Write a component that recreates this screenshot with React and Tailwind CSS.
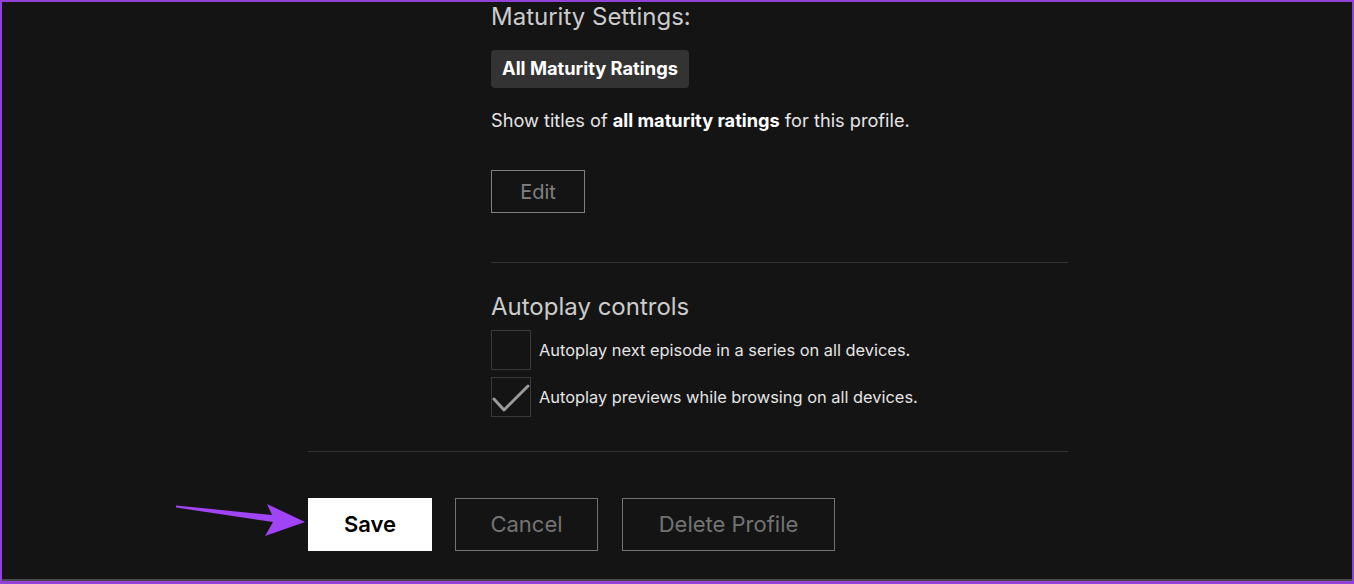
import React from 'react'

const font = { fontFamily: 'Inter, "Noto Sans", sans-serif' }

function CheckRow({ checked, label }) {
  return (
    <div className="flex items-center gap-2">
      <div className="w-10 h-10 border border-[#3a3a3a] flex items-center justify-center">
        {checked && (
          <svg width="38" height="38" viewBox="0 0 38 38" fill="none">
            <path d="M2 21 L12 32 L36 8" stroke="#9a9a9a" strokeWidth="3" strokeLinecap="round" strokeLinejoin="round" />
          </svg>
        )}
      </div>
      <span className="text-[16.4px] text-[#e5e5e5]">{label}</span>
    </div>
  )
}

export default function App() {
  return (
    <div
      className="relative w-[1354px] h-[584px] bg-[#9241d6] pt-[2px] px-[2px] pb-[3px] overflow-hidden"
      style={font}
    >
      <div className="h-full bg-[#141414] border-b-2 border-[#4a4a4a] pl-[306px]">
        <div className="w-[760px] flex flex-col">
          {/* Profile settings column */}
          <div className="ml-[183px] flex flex-col items-start">
            <h2 className="mt-[1px] text-[24px] leading-[28px] text-[#cccccc]">Maturity Settings:</h2>

            <div className="mt-[19px] h-[38px] px-[11px] flex items-center bg-[#333333] rounded-sm text-[18.3px] font-bold text-white">
              All Maturity Ratings
            </div>

            <p className="mt-5 text-[18.2px] leading-6 text-[#e5e5e5]">
              Show titles of <span className="font-bold text-white">all maturity ratings</span> for this profile.
            </p>

            <button className="mt-[38px] w-[94px] h-[43px] border border-[#808080] text-[20px] text-[#808080]">
              Edit
            </button>

            <div className="mt-[49px] w-[577px] h-px bg-[#333333]" />

            <h2 className="mt-[30px] text-[24px] leading-[28px] text-[#cccccc]">Autoplay controls</h2>

            <div className="mt-[9px] flex flex-col gap-[7px]">
              <CheckRow label="Autoplay next episode in a series on all devices." />
              <CheckRow checked label="Autoplay previews while browsing on all devices." />
            </div>
          </div>

          <div className="mt-[34px] h-px bg-[#333333]" />

          {/* Action buttons */}
          <div className="mt-[46px] flex">
            <button className="w-[124px] h-[53px] bg-white text-black text-[22px] font-semibold">Save</button>
            <button className="ml-[23px] w-[143px] h-[53px] border border-[#737373] text-[#737373] text-[22px]">Cancel</button>
            <button className="ml-6 w-[213px] h-[53px] border border-[#737373] text-[#737373] text-[22px]">Delete Profile</button>
          </div>
        </div>
      </div>

      {/* annotation arrow */}
      <svg className="absolute left-0 top-0 pointer-events-none" width="1354" height="584" viewBox="0 0 1354 584">
        <polygon
          points="176,505.5 272,515 267,504 305,522 265,536 273,522 176,507.5"
          fill="#a144f5"
        />
      </svg>
    </div>
  )
}
